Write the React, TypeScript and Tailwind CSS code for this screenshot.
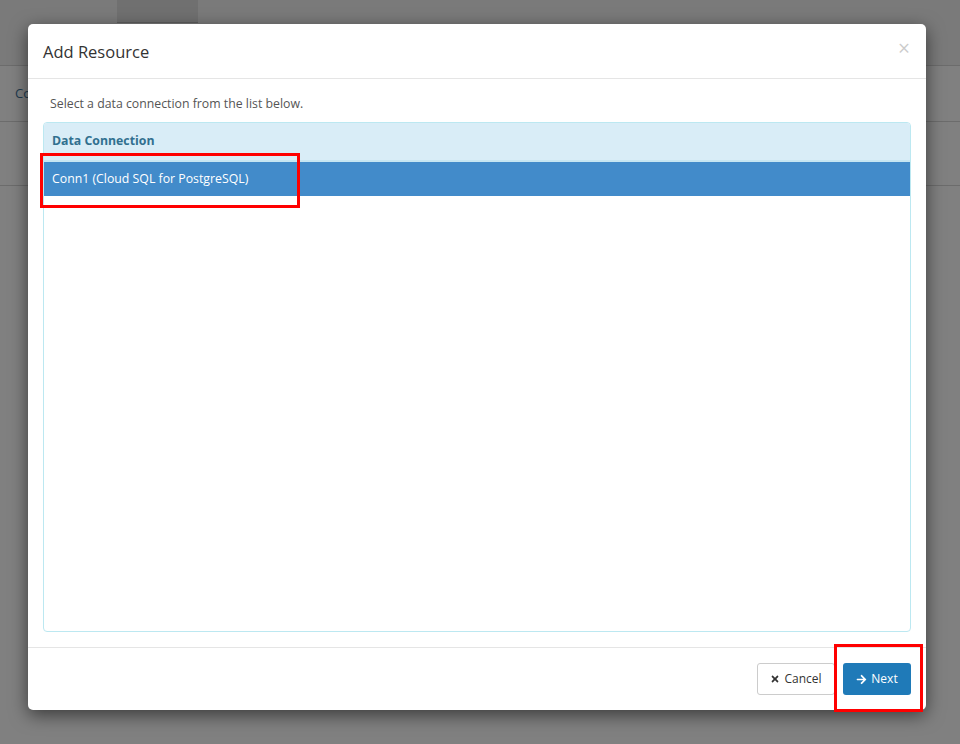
import { FaTimes, FaArrowRight } from "react-icons/fa";

function App() {
  return (
    <div
      className="relative w-[960px] h-[744px] overflow-hidden bg-[#808080]"
      style={{ fontFamily: '"Open Sans", "Noto Sans", sans-serif' }}
    >
      {/* page behind the backdrop */}
      <div className="flex flex-col">
        <div className="h-[66px] bg-[#7a7a7a] border-b border-[#6c6c6c] flex">
          <div className="ml-[117px] w-[81px] h-[23px] bg-[#707070] border-b border-[#5e5e5e]" />
        </div>
        <div className="h-[56px] border-b border-[#6c6c6c] flex items-center pl-[15px] text-[13px] text-[#1e3a4f]">
          Co
        </div>
        <div className="h-[64px] border-b border-[#6c6c6c]" />
      </div>

      {/* modal */}
      <div className="absolute left-[28px] top-[24px] w-[898px] h-[686px] bg-white rounded-[5px] shadow-[0_5px_18px_rgba(0,0,0,0.55)] flex flex-col">
        <div className="h-[55px] border-b border-[#e5e5e5] flex items-center justify-between pl-[15px] pr-[16px]">
          <h4 className="text-[16.5px] text-[#333] leading-none mt-[2px]">Add Resource</h4>
          <span className="text-[21px] font-normal leading-none text-black opacity-20 mb-[6px]">×</span>
        </div>
        <div className="flex-1 flex flex-col px-[15px] pt-[16px] pb-[15px] min-h-0">
          <p className="text-[12.3px] text-[#555] leading-[17px] pl-[7px] mb-[10px]">
            Select a data connection from the list below.
          </p>
          <div className="flex-1 border border-[#bce8f1] rounded-[4px] overflow-hidden flex flex-col">
            <div className="h-[39px] shrink-0 bg-[#d9edf7] border-b-2 border-[#c6e6f2] flex items-center pl-[8px] text-[12.3px] font-bold text-[#31708f]">
              Data Connection
            </div>
            <div className="h-[34px] shrink-0 bg-[#428bca] flex items-center pl-[8px] text-[12.3px] text-white">
              Conn1 (Cloud SQL for PostgreSQL)
            </div>
          </div>
        </div>
        <div className="h-[63px] border-t border-[#e5e5e5] flex items-center justify-end gap-[8px] pr-[15px]">
          <button className="h-[32px] w-[78px] border border-[#ccc] rounded-[3px] bg-white text-[12px] text-[#333] flex items-center justify-center gap-[4px]">
            <FaTimes className="w-[10px] h-[10px]" />
            Cancel
          </button>
          <button className="h-[32px] w-[68px] rounded-[3px] bg-[#1f7ab8] text-[12px] text-white flex items-center justify-center gap-[4px]">
            <FaArrowRight className="w-[11px] h-[11px]" />
            Next
          </button>
        </div>
      </div>

      {/* annotation boxes */}
      <div className="absolute left-[40px] top-[153px] w-[260px] h-[55px] border-[3px] border-[#ff0000]" />
      <div className="absolute left-[834px] top-[644px] w-[89px] h-[68px] border-[3px] border-[#ff0000]" />
    </div>
  );
}

export default App;
